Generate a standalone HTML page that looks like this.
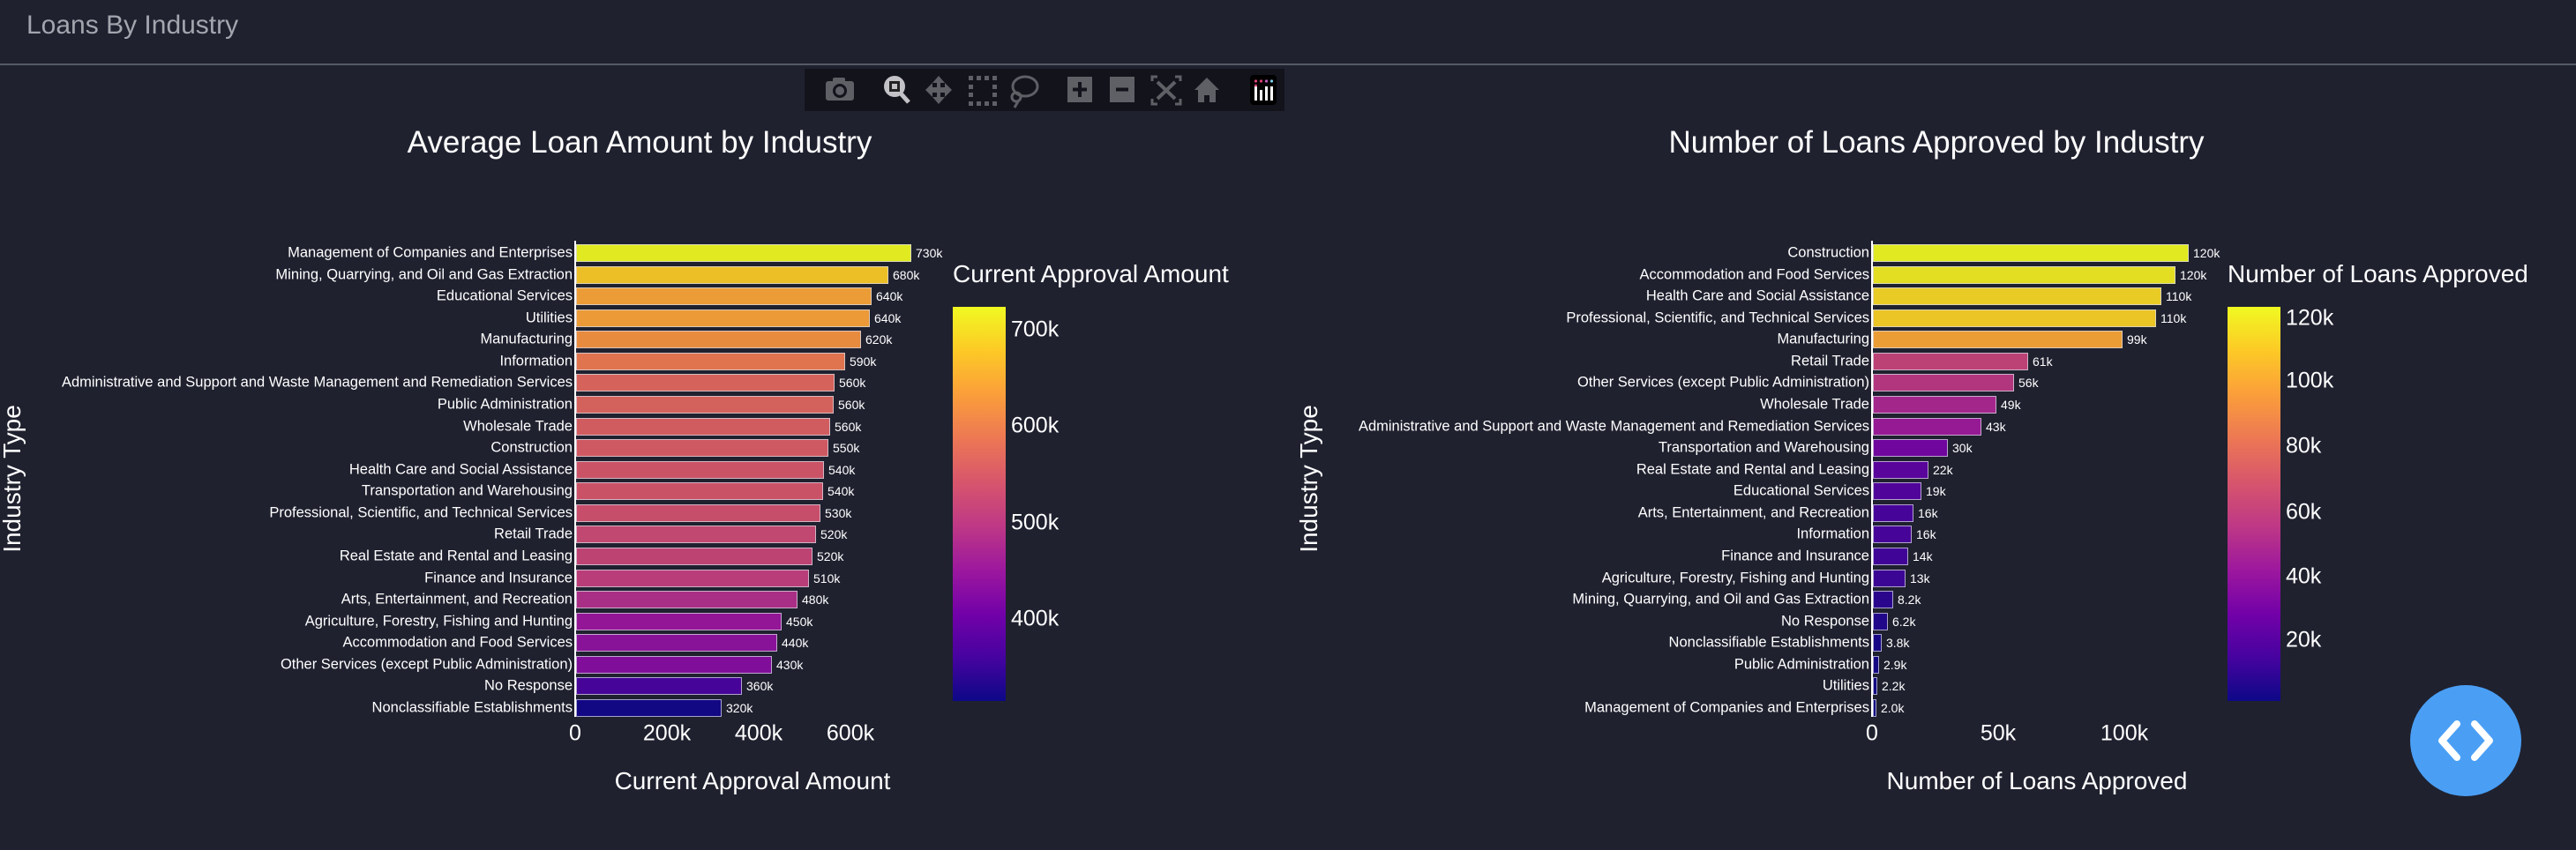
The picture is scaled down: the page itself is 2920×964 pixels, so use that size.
<!DOCTYPE html>
<html><head><meta charset="utf-8">
<style>
html,body{margin:0;padding:0;background:#1f212f;width:2920px;height:964px;overflow:hidden;font-family:"Liberation Sans",sans-serif;color:#fff}
.a{position:absolute;white-space:nowrap}
.lab{position:absolute;font-size:16.5px;text-align:right;transform:translateY(-50%)}
.val{position:absolute;font-size:14px;transform:translateY(-50%)}
.bar{position:absolute;height:20px;box-sizing:border-box;border:1.5px solid rgba(230,230,240,0.75);transform:translateY(-50%)}
.tick{position:absolute;font-size:25px;transform:translate(-50%,-50%)}
.ctick{position:absolute;font-size:25px;transform:translateY(-50%)}
.ttl{position:absolute;font-size:35px;transform:translate(-50%,-50%)}
.axt{position:absolute;font-size:28px;transform:translate(-50%,-50%)}
</style></head><body>
<div class="a" style="left:30px;top:12px;font-size:30px;color:#a3a6ae">Loans By Industry</div>
<div class="a" style="left:0;top:72px;width:2920px;height:2px;background:#555a66"></div>
<div class="a" style="left:912px;top:78px;width:544px;height:48px;background:#12131b"></div>
<svg class="a" style="left:912px;top:78px" width="544" height="48" viewBox="0 0 544 48">
 <g fill="#5f6066">
  <rect x="24" y="14" width="32" height="22" rx="3"/><rect x="32" y="10" width="14" height="6" rx="2"/>
  <circle cx="40" cy="25" r="8" fill="#12131b"/><circle cx="40" cy="25" r="5"/>
 </g>
 <circle cx="102" cy="20" r="12" fill="#c3c3c7"/><rect x="96" y="14" width="12" height="12" fill="#222"/><rect x="99" y="17" width="6" height="6" fill="#c3c3c7"/>
 <path d="M109 28 L118 38" stroke="#c3c3c7" stroke-width="5"/>
 <g fill="#5f6066">
  <path d="M152 8 L159 16 H154 V21 H159 V16 L167 24 L159 32 V27 H154 V32 H159 L152 40 L145 32 H150 V27 H145 V32 L137 24 L145 16 V21 H150 V16 H145 Z"/>
 </g>
 <g fill="#5f6066">
  <rect x="186" y="8" width="5" height="5"/><rect x="195" y="8" width="5" height="5"/><rect x="204" y="8" width="5" height="5"/><rect x="213" y="8" width="5" height="5"/>
  <rect x="186" y="37" width="5" height="5"/><rect x="195" y="37" width="5" height="5"/><rect x="204" y="37" width="5" height="5"/><rect x="213" y="37" width="5" height="5"/>
  <rect x="186" y="18" width="5" height="5"/><rect x="186" y="27" width="5" height="5"/><rect x="213" y="18" width="5" height="5"/><rect x="213" y="27" width="5" height="5"/>
 </g>
 <g fill="none" stroke="#5f6066" stroke-width="3"><ellipse cx="250" cy="20" rx="14" ry="11"/><circle cx="240" cy="32" r="5"/><path d="M242 37 L238 44"/></g>
 <rect x="298" y="9" width="28" height="29" fill="#5f6066"/><path d="M312 15 V32 M304 23.5 H320" stroke="#12131b" stroke-width="4"/>
 <rect x="346" y="9" width="28" height="29" fill="#5f6066"/><path d="M353 23.5 H367" stroke="#12131b" stroke-width="4"/>
 <g stroke="#5f6066" stroke-width="3" fill="none"><path d="M394 14 V9 H400 M420 9 H426 V14 M426 34 V40 H420 M400 40 H394 V34"/><path d="M400 15 L420 34 M420 15 L400 34" stroke-width="4"/></g>
 <path d="M442 24 L456 10 L470 24 H466 V38 H459 V30 H453 V38 H446 V24 Z" fill="#5f6066"/>
 <rect x="505" y="7" width="30" height="34" rx="4" fill="#000"/>
 <g fill="#fff"><rect x="510" y="20" width="3" height="16"/><rect x="516" y="24" width="3" height="12"/><rect x="522" y="20" width="3" height="16"/><rect x="528" y="20" width="3" height="16"/></g>
 <g><circle cx="511.5" cy="14" r="1.6" fill="#e0447b"/><circle cx="517.5" cy="14" r="1.6" fill="#e0447b"/><circle cx="523.5" cy="14" r="1.6" fill="#c45cbb"/><circle cx="529.5" cy="14" r="1.6" fill="#7ad0ef"/><circle cx="511.5" cy="19" r="1.4" fill="#e0447b"/></g>
</svg>

<div class="ttl" style="left:725px;top:162px">Average Loan Amount by Industry</div>
<div class="ttl" style="left:2195px;top:162px">Number of Loans Approved by Industry</div>
<div class="axt" style="left:853px;top:886px">Current Approval Amount</div>
<div class="axt" style="left:2309px;top:886px">Number of Loans Approved</div>
<div class="a" style="left:1080px;top:295px;font-size:28px">Current Approval Amount</div>
<div class="a" style="left:2525px;top:295px;font-size:28px">Number of Loans Approved</div>
<div class="axt" style="left:14px;top:543px;transform:translate(-50%,-50%) rotate(-90deg);font-size:28px">Industry Type</div>
<div class="axt" style="left:1484px;top:543px;transform:translate(-50%,-50%) rotate(-90deg);font-size:28px">Industry Type</div>

<div class="a" style="left:1080px;top:348px;width:60px;height:447px;background:linear-gradient(to top,#0d0887,#46039f 11%,#7201a8 22%,#9c179e 33%,#bd3786 44%,#d8576b 56%,#ed7953 67%,#fb9f3a 78%,#fdca26 89%,#f0f921)"></div>
<div class="a" style="left:2525px;top:348px;width:60px;height:447px;background:linear-gradient(to top,#0d0887,#46039f 11%,#7201a8 22%,#9c179e 33%,#bd3786 44%,#d8576b 56%,#ed7953 67%,#fb9f3a 78%,#fdca26 89%,#f0f921)"></div>
<div class="ctick" style="left:1146px;top:374px">700k</div>
<div class="ctick" style="left:1146px;top:483px">600k</div>
<div class="ctick" style="left:1146px;top:593px">500k</div>
<div class="ctick" style="left:1146px;top:702px">400k</div>
<div class="ctick" style="left:2591px;top:361px">120k</div>
<div class="ctick" style="left:2591px;top:432px">100k</div>
<div class="ctick" style="left:2591px;top:506px">80k</div>
<div class="ctick" style="left:2591px;top:581px">60k</div>
<div class="ctick" style="left:2591px;top:654px">40k</div>
<div class="ctick" style="left:2591px;top:726px">20k</div>

<div class="tick" style="left:652px;top:832px">0</div>
<div class="tick" style="left:756px;top:832px">200k</div>
<div class="tick" style="left:860px;top:832px">400k</div>
<div class="tick" style="left:964px;top:832px">600k</div>
<div class="tick" style="left:2122px;top:832px">0</div>
<div class="tick" style="left:2265px;top:832px">50k</div>
<div class="tick" style="left:2408px;top:832px">100k</div>

<div id="c"></div>
<svg class="a" style="left:2732px;top:777px" width="126" height="126"><circle cx="63" cy="63" r="63" fill="#4a9ff5"/><path d="M53 44 L36 63 L53 82 M73 44 L90 63 L73 82" stroke="#fff" stroke-width="8" fill="none" stroke-linecap="round" stroke-linejoin="round"/></svg>

<script>
var P=["#0d0887","#46039f","#7201a8","#9c179e","#bd3786","#d8576b","#ed7953","#fb9f3a","#fdca26","#f0f921"];
function h(c){return [parseInt(c.substr(1,2),16),parseInt(c.substr(3,2),16),parseInt(c.substr(5,2),16)]}
function col(t){t=Math.max(0,Math.min(1,t));var s=t*9,i=Math.min(8,Math.floor(s)),f=s-i,a=h(P[i]),b=h(P[i+1]);
return "rgb("+a.map(function(v,k){return Math.round(v+(b[k]-v)*f)}).join(",")+")"}
var c=document.getElementById("c"),html="";
function chart(ax,data,lo,hi){
 html+='<div class="a" style="left:'+(ax-1)+'px;top:273px;width:2px;height:540px;background:#fff"></div>';
 data.forEach(function(d,i){var y=287+i*24.57,w=d[1]-ax;
  html+='<div class="lab" style="right:'+(2920-ax+3)+'px;top:'+y+'px">'+d[0]+'</div>';
  html+='<div class="bar" style="left:'+(ax+1)+'px;top:'+y+'px;width:'+w+'px;background:'+col((d[3]-lo)/(hi-lo))+';opacity:0.93"></div>';
  html+='<div class="val" style="left:'+(d[1]+6)+'px;top:'+y+'px">'+d[2]+'</div>';});
}
chart(652,[
["Management of Companies and Enterprises",1032,"730k",730],
["Mining, Quarrying, and Oil and Gas Extraction",1006,"680k",680],
["Educational Services",987,"640k",640],
["Utilities",985,"640k",638],
["Manufacturing",975,"620k",620],
["Information",957,"590k",590],
["Administrative and Support and Waste Management and Remediation Services",945,"560k",565],
["Public Administration",944,"560k",563],
["Wholesale Trade",940,"560k",556],
["Construction",938,"550k",552],
["Health Care and Social Assistance",933,"540k",543],
["Transportation and Warehousing",932,"540k",541],
["Professional, Scientific, and Technical Services",929,"530k",535],
["Retail Trade",924,"520k",525],
["Real Estate and Rental and Leasing",920,"520k",518],
["Finance and Insurance",916,"510k",510],
["Arts, Entertainment, and Recreation",903,"480k",485],
["Agriculture, Forestry, Fishing and Hunting",885,"450k",450],
["Accommodation and Food Services",880,"440k",440],
["Other Services (except Public Administration)",874,"430k",430],
["No Response",840,"360k",365],
["Nonclassifiable Establishments",817,"320k",320]],315,724);
chart(2122,[
["Construction",2480,"120k",125],
["Accommodation and Food Services",2465,"120k",120],
["Health Care and Social Assistance",2449,"110k",114],
["Professional, Scientific, and Technical Services",2443,"110k",112],
["Manufacturing",2405,"99k",99],
["Retail Trade",2298,"61k",61],
["Other Services (except Public Administration)",2282,"56k",56],
["Wholesale Trade",2262,"49k",49],
["Administrative and Support and Waste Management and Remediation Services",2245,"43k",43],
["Transportation and Warehousing",2207,"30k",30],
["Real Estate and Rental and Leasing",2185,"22k",22],
["Educational Services",2177,"19k",19],
["Arts, Entertainment, and Recreation",2168,"16k",16],
["Information",2166,"16k",16],
["Finance and Insurance",2162,"14k",14],
["Agriculture, Forestry, Fishing and Hunting",2159,"13k",13],
["Mining, Quarrying, and Oil and Gas Extraction",2145,"8.2k",8.2],
["No Response",2139,"6.2k",6.2],
["Nonclassifiable Establishments",2132,"3.8k",3.8],
["Public Administration",2129,"2.9k",2.9],
["Utilities",2127,"2.2k",2.2],
["Management of Companies and Enterprises",2126,"2.0k",2.0]],1.1,123.6);
c.innerHTML=html;
</script>
</body></html>
